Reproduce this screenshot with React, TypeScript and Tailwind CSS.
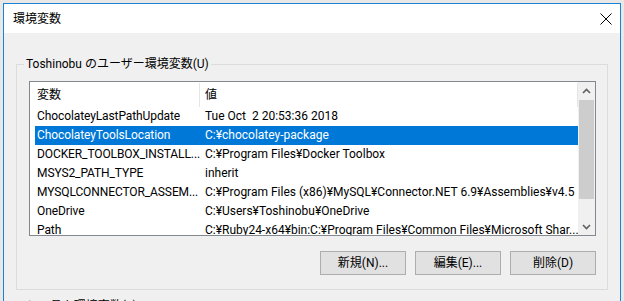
import React from 'react';

const rows: { name: string; value: string; selected?: boolean }[] = [
  { name: 'ChocolateyLastPathUpdate', value: 'Tue Oct  2 20:53:36 2018' },
  { name: 'ChocolateyToolsLocation', value: 'C:¥chocolatey-package', selected: true },
  { name: 'DOCKER_TOOLBOX_INSTALL...', value: 'C:¥Program Files¥Docker Toolbox' },
  { name: 'MSYS2_PATH_TYPE', value: 'inherit' },
  { name: 'MYSQLCONNECTOR_ASSEM...', value: 'C:¥Program Files (x86)¥MySQL¥Connector.NET 6.9¥Assemblies¥v4.5' },
  { name: 'OneDrive', value: 'C:¥Users¥Toshinobu¥OneDrive' },
  { name: 'Path', value: 'C:¥Ruby24-x64¥bin:C:¥Program Files¥Common Files¥Microsoft Shar...' },
];

const font = "font-['Roboto','Noto_Sans_CJK_JP',sans-serif]";

const Chevron = ({ up }: { up?: boolean }) => (
  <svg width="9" height="6" viewBox="0 0 9 6" className="block">
    <path
      d={up ? 'M1 5 L4.5 1.5 L8 5' : 'M1 1 L4.5 4.5 L8 1'}
      fill="none"
      stroke="#606060"
      strokeWidth="1.6"
    />
  </svg>
);

const Button = ({ label }: { label: string }) => (
  <button className="w-[86px] h-[24px] bg-[#e1e1e1] border border-[#adadad] text-[12px] text-black flex items-center justify-center">
    {label}
  </button>
);

export default function App() {
  return (
    <div className={`w-[624px] h-[301px] overflow-hidden bg-[#e9e8e6] pt-[3px] px-[3px] ${font} text-[12px] text-black`}>
      <div className="h-full flex flex-col border-t border-x border-[#1883d7]">
        {/* title bar */}
        <div className="h-[29px] bg-white flex items-center justify-between pl-[9px] pr-[8px] shrink-0">
          <span className="leading-[16px]">環境変数</span>
          <svg width="12" height="12" viewBox="0 0 12 12">
            <path d="M0.5 0.5 L11.5 11.5 M11.5 0.5 L0.5 11.5" stroke="#000" strokeWidth="1" />
          </svg>
        </div>

        {/* body */}
        <div className="flex-1 bg-[#f0f0f0] px-[12px] pt-[23px]">
          <fieldset className="border border-[#dcdcdc] p-0 m-0 min-w-0">
            <legend className="ml-[7px] px-[2px] leading-[16px]">Toshinobu のユーザー環境変数(U)</legend>
            <div className="ml-[12px] mr-[11px] mt-[9px] h-[155px] border border-[#828790] bg-white flex overflow-hidden">
              <div className="w-[548px] flex flex-col">
                <div className="h-[25px] flex shrink-0">
                  <div className="w-[169px] pl-[7px] pt-[5px] leading-[16px]">変数</div>
                  <div className="w-px h-[24px] mt-px bg-[#e5e5e5]" />
                  <div className="flex-1 pl-[5px] pt-[5px] leading-[16px]">値</div>
                  <div className="w-px h-[24px] mt-px bg-[#e5e5e5]" />
                </div>
                {rows.map((r) => (
                  <div
                    key={r.name}
                    className={`ml-[5px] h-[19px] shrink-0 flex leading-[19px] whitespace-pre ${
                      r.selected ? 'bg-[#0078d7] text-white' : ''
                    }`}
                  >
                    <div className="w-[164px] shrink-0 pl-[2px] tracking-[-0.1px]">{r.name}</div>
                    <div className="flex-1 pl-[6px] overflow-hidden">{r.value}</div>
                  </div>
                ))}
              </div>
              {/* scrollbar */}
              <div className="w-[17px] bg-[#f0f0f0] flex flex-col">
                <div className="h-[18px] flex items-center justify-center">
                  <Chevron up />
                </div>
                <div className="h-[99px] mx-[1px] bg-[#cdcdcd]" />
                <div className="flex-1" />
                <div className="h-[17px] flex items-center justify-center">
                  <Chevron />
                </div>
              </div>
            </div>
            <div className="flex justify-end gap-[9px] mr-[11px] mt-[15px] mb-[14px]">
              <Button label="新規(N)..." />
              <Button label="編集(E)..." />
              <Button label="削除(D)" />
            </div>
          </fieldset>
          <fieldset className="border border-[#dcdcdc] p-0 m-0 mt-[8px] min-w-0">
            <legend className="ml-[7px] px-[2px] leading-[16px]">システム環境変数(S)</legend>
            <div className="h-[40px]" />
          </fieldset>
        </div>
      </div>
    </div>
  );
}
